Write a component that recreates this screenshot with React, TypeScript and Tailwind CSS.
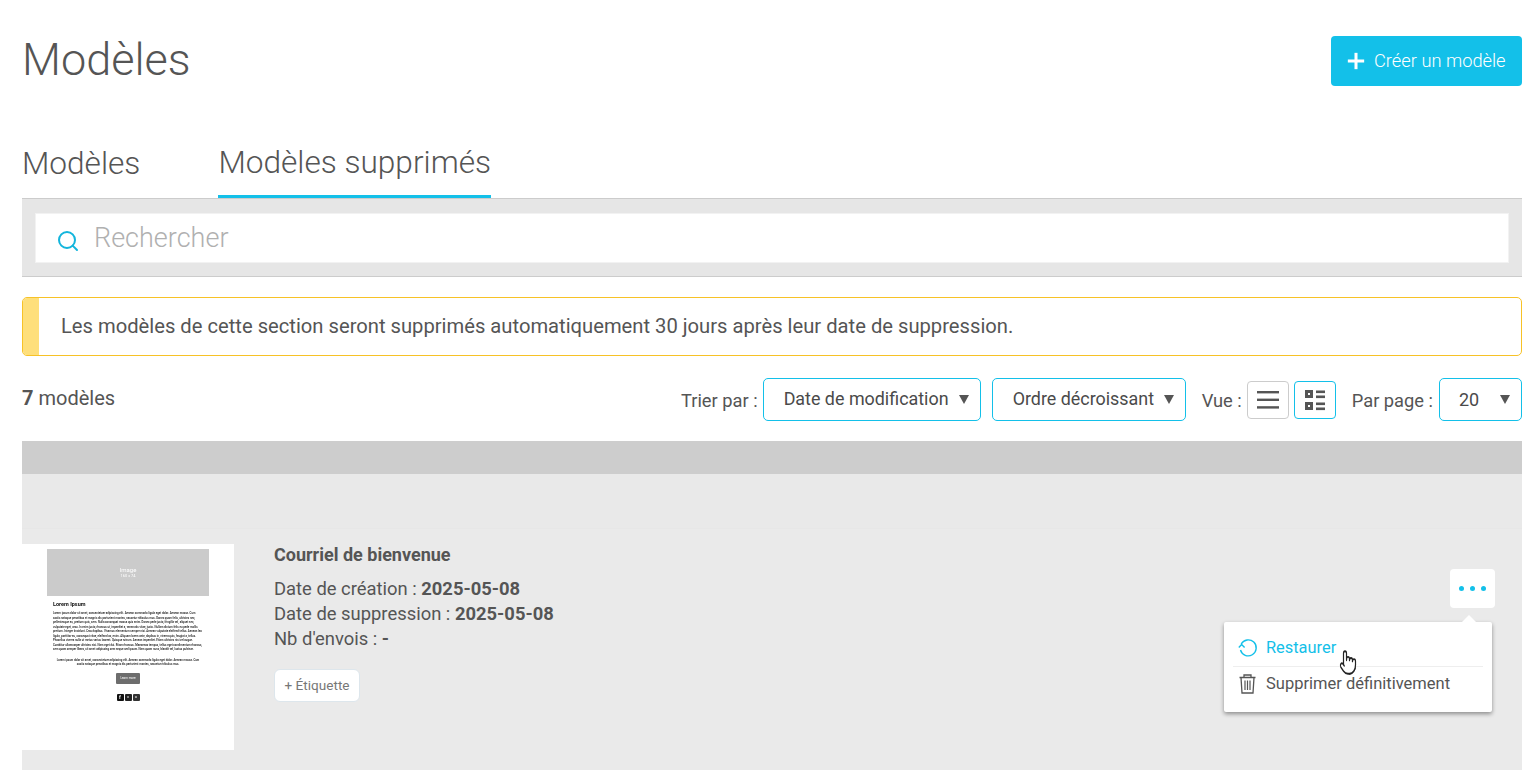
import { Search, Plus, Pointer } from "lucide-react";

const LOREM =
  "Lorem ipsum dolor sit amet, consectetuer adipiscing elit. Aenean commodo ligula eget dolor. Aenean massa. Cum sociis natoque penatibus et magnis dis parturient montes, nascetur ridiculus mus. Donec quam felis, ultricies nec, pellentesque eu, pretium quis, sem. Nulla consequat massa quis enim. Donec pede justo, fringilla vel, aliquet nec, vulputate eget, arcu. In enim justo, rhoncus ut, imperdiet a, venenatis vitae, justo. Nullam dictum felis eu pede mollis pretium. Integer tincidunt. Cras dapibus. Vivamus elementum semper nisi. Aenean vulputate eleifend tellus. Aenean leo ligula, porttitor eu, consequat vitae, eleifend ac, enim. Aliquam lorem ante, dapibus in, viverra quis, feugiat a, tellus. Phasellus viverra nulla ut metus varius laoreet. Quisque rutrum. Aenean imperdiet. Etiam ultricies nisi vel augue. Curabitur ullamcorper ultricies nisi. Nam eget dui. Etiam rhoncus. Maecenas tempus, tellus eget condimentum rhoncus, sem quam semper libero, sit amet adipiscing sem neque sed ipsum. Nam quam nunc, blandit vel, luctus pulvinar.";

function SelectBox({ label, className }: { label: string; className: string }) {
  return (
    <div className={`flex h-[43px] items-center justify-between rounded-[5px] border border-[#13c0e9] bg-white pl-[20px] pr-[11px] text-[17.9px] text-[#4a4a4a] ${className}`}>
      <span>{label}</span>
      <span className="h-0 w-0 border-x-[5px] border-t-[9px] border-x-transparent border-t-[#555]" />
    </div>
  );
}

function Thumbnail() {
  return (
    <div className="flex h-[206px] w-[212px] flex-col items-center bg-white pt-[5px] blur-[0.35px]">
      <div className="flex h-[47px] w-[162px] flex-col items-center justify-center bg-[#cbcbcb] text-[6px] leading-[6px] text-white">
        <span>Image</span>
        <span className="text-[4px] leading-[5px]">160 x 74</span>
      </div>
      <div className="mt-[5px] w-[150px] text-[2.8px] leading-[4.5px] font-medium text-[#111]">
        <p className="mb-[3px] text-[5.5px] leading-[7px] font-bold text-[#111]">Lorem Ipsum</p>
        <p>{LOREM}</p>
        <p className="mt-[6px] text-center">
          Lorem ipsum dolor sit amet, consectetuer adipiscing elit. Aenean commodo ligula eget dolor. Aenean massa. Cum sociis natoque penatibus et magnis dis parturient montes, nascetur ridiculus mus.
        </p>
      </div>
      <div className="mt-[6px] flex h-[11px] w-[24px] items-center justify-center rounded-[1px] bg-[#6d6d6d] text-[3px] text-white">
        Learn more
      </div>
      <div className="mt-[10px] flex gap-[1px]">
        <span className="flex h-[7px] w-[7px] items-center justify-center rounded-[1px] bg-[#111] text-[5px] leading-none font-bold text-white">f</span>
        <span className="flex h-[7px] w-[7px] items-center justify-center rounded-[1px] bg-[#222] text-[4px] leading-none text-white">x</span>
        <span className="flex h-[7px] w-[7px] items-center justify-center rounded-[1px] bg-[#333] text-[4px] leading-none text-white">o</span>
      </div>
    </div>
  );
}

export default function App() {
  return (
    <div className="h-[770px] overflow-hidden bg-white pl-[22px] pr-[5px] font-['Roboto',sans-serif] text-[#555]">
      <header className="flex h-[122px] items-start justify-between pt-[36px]">
        <h1 className="-mt-[3px] text-[45px] leading-[54px] font-light text-[#555]">Modèles</h1>
        <button className="flex h-[50px] w-[191px] items-center gap-[4px] rounded-[4px] bg-[#13c0e9] pl-[11px] text-[18.3px] font-light text-white">
          <Plus className="h-[28px] w-[28px]" strokeWidth={2.6} strokeLinecap="butt" />
          Créer un modèle
        </button>
      </header>

      <nav className="flex h-[77px] gap-[78px] border-b border-[#ccc] text-[31.6px] leading-[38px] font-light">
        <div className="pt-[23px] text-[#555]">Modèles</div>
        <div className="mb-[-1px] h-[76px] border-b-[3px] border-[#13c0e9] pt-[22px] text-[#555]">Modèles supprimés</div>
      </nav>

      <div className="h-[78px] border-b border-[#ccc] bg-[#e6e6e6] px-[13px] pt-[14px]">
        <div className="flex h-[50px] items-center border border-[#f2f2f2] bg-white pl-[20px]">
          <Search className="mt-[5px] h-[24px] w-[24px] text-[#13b5dc]" strokeWidth={2} />
          <span className="ml-[14px] text-[27px] font-light text-[#b0b0b0]">Rechercher</span>
        </div>
      </div>

      <div className="mt-[20px] flex h-[59px] items-center overflow-hidden rounded-[5px] border border-[#f7c227]">
        <div className="h-full w-[16px] bg-[#fedf7b]" />
        <p className="ml-[22px] text-[20.2px] text-[#555]">
          Les modèles de cette section seront supprimés automatiquement 30 jours après leur date de suppression.
        </p>
      </div>

      <div className="mt-[22px] flex h-[43px] items-center justify-between">
        <p className="-mt-[3px] text-[20px]">
          <b className="font-bold">7</b> modèles
        </p>
        <div className="flex items-center text-[18.3px]">
          <span className="mr-[5px] mt-[2px]">Trier par :</span>
          <SelectBox label="Date de modification" className="w-[218px]" />
          <SelectBox label="Ordre décroissant" className="ml-[11px] w-[194px]" />
          <span className="ml-[16px] mr-[5px] mt-[2px]">Vue :</span>
          <div className="flex h-[38px] w-[42px] items-center justify-center rounded-[4px] border border-[#ccc] bg-white">
            <svg width="22" height="18" viewBox="0 0 22 18" fill="#555">
              <rect y="0" width="22" height="2.4" />
              <rect y="7.6" width="22" height="2.4" />
              <rect y="15.2" width="22" height="2.4" />
            </svg>
          </div>
          <div className="ml-[5px] flex h-[38px] w-[42px] items-center justify-center rounded-[4px] border border-[#13c0e9] bg-white">
            <svg className="mt-[1px]" width="20" height="21" viewBox="0 0 20 21" fill="none">
              <path d="M1.5 1.5h5v5h-5zM1.5 13.5h5v5h-5z" fill="none" stroke="#555" strokeWidth="3" />
              <rect x="11" y="0.5" width="9" height="2.6" fill="#555" />
              <rect x="11" y="5.5" width="9" height="2.6" fill="#555" />
              <rect x="11" y="12.5" width="9" height="2.6" fill="#555" />
              <rect x="11" y="17.5" width="9" height="2.6" fill="#555" />
            </svg>
          </div>
          <span className="ml-[16px] mr-[6px] mt-[2px]">Par page :</span>
          <div className="flex h-[43px] w-[83px] items-center justify-between rounded-[5px] border border-[#13c0e9] bg-white pl-[19px] pr-[11px] text-[18px] text-[#4a4a4a]">
            <span>20</span>
            <span className="h-0 w-0 border-x-[5px] border-t-[9px] border-x-transparent border-t-[#555]" />
          </div>
        </div>
      </div>

      <div className="mt-[20px] h-[33px] bg-[#cdcdcd]" />

      <div className="relative h-[296px] bg-[#eaeaea]">
        <div className="h-[55px] border-b border-[#e7e7e7] bg-[#e9e9e9]" />
        <div className="flex pt-[15px]">
          <Thumbnail />
          <div className="ml-[40px] text-[18.4px] leading-[25px]">
            <h2 className="-mt-[1px] mb-[9px] text-[18px] leading-[24px] font-bold text-[#555]">Courriel de bienvenue</h2>
            <p>Date de création : <b className="font-bold">2025-05-08</b></p>
            <p>Date de suppression : <b className="font-bold">2025-05-08</b></p>
            <p>Nb d'envois : <b className="font-bold">-</b></p>
            <button className="mt-[18px] flex h-[33px] w-[86px] items-center justify-center rounded-[6px] border border-[#dde6ec] bg-white text-[13.6px] text-[#777]">
              + Étiquette
            </button>
          </div>
        </div>

        <button className="absolute top-[95px] right-[27px] flex h-[39px] w-[45px] items-center justify-center gap-[6px] rounded-[4px] bg-white">
          <span className="h-[5px] w-[5px] rounded-full bg-[#13c0e9]" />
          <span className="h-[5px] w-[5px] rounded-full bg-[#13c0e9]" />
          <span className="h-[5px] w-[5px] rounded-full bg-[#13c0e9]" />
        </button>

        <div className="absolute top-[148px] right-[30px] w-[268px] rounded-[2px] bg-white px-[9px] pb-[11px] pt-[8px] shadow-[0_2px_4px_rgba(0,0,0,0.4)]">
          <span className="absolute -top-[7px] right-[16px] h-0 w-0 border-x-[7px] border-b-[7px] border-x-transparent border-b-white" />
          <div className="flex h-[37px] items-center gap-[8px] border-b border-[#eee] pl-[5px] text-[16.4px] text-[#13c0e9]">
            <svg width="20" height="20" viewBox="0 0 20 20" fill="none" stroke="#13c0e9" strokeWidth="1.4">
              <path d="M3.2 6A8 8 0 1 1 2.5 12" />
              <path d="M0.8 9.6L3.6 6.6L6.6 9.6" />
            </svg>
            Restaurer
          </div>
          <div className="flex h-[34px] items-center gap-[10px] pl-[6px] text-[16.5px] text-[#555]">
            <svg width="17" height="20" viewBox="0 0 17 20" fill="none" stroke="#555" strokeWidth="1.3">
              <path d="M0.5 3.5H16.5M5 3.5V1H12V3.5M2 3.5L3 19H14L15 3.5" />
              <path d="M6 6.5V16M8.5 6.5V16M11 6.5V16" strokeWidth="1.2" />
            </svg>
            Supprimer définitivement
          </div>

          <Pointer preserveAspectRatio="none" className="absolute top-[27px] left-[115px] h-[27px] w-[18px] fill-white text-[#222]" strokeWidth={1.6} />
        </div>
      </div>
    </div>
  );
}
